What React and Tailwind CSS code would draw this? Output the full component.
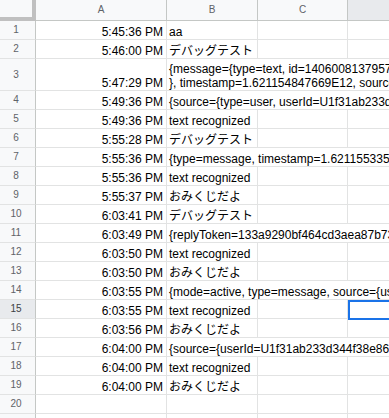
import React from "react";

const rows = [
  { n: 1, time: "5:45:36 PM", text: "aa" },
  { n: 2, time: "5:46:00 PM", text: "デバッグテスト" },
  {
    n: 3,
    time: "5:47:29 PM",
    lines: [
      "{message={type=text, id=14060081379573, text=デバッグテスト}, replyToken=5b2f1c0e",
      "}, timestamp=1.621154847669E12, source={type=user, userId=U1f31ab233d344f38e86}",
    ],
    wide: true,
    tall: true,
  },
  { n: 4, time: "5:49:36 PM", text: "{source={type=user, userId=U1f31ab233d344f38e86a1c}, mode=active}", wide: true },
  { n: 5, time: "5:49:36 PM", text: "text recognized" },
  { n: 6, time: "5:55:28 PM", text: "デバッグテスト" },
  { n: 7, time: "5:55:36 PM", text: "{type=message, timestamp=1.621155335806E12, source={type=user}}", wide: true },
  { n: 8, time: "5:55:36 PM", text: "text recognized" },
  { n: 9, time: "5:55:37 PM", text: "おみくじだよ" },
  { n: 10, time: "6:03:41 PM", text: "デバッグテスト" },
  { n: 11, time: "6:03:49 PM", text: "{replyToken=133a9290bf464cd3aea87b73e4c1f0a2, type=message}", wide: true },
  { n: 12, time: "6:03:50 PM", text: "text recognized" },
  { n: 13, time: "6:03:50 PM", text: "おみくじだよ" },
  { n: 14, time: "6:03:55 PM", text: "{mode=active, type=message, source={userId=U1f31ab233d}}", wide: true },
  { n: 15, time: "6:03:55 PM", text: "text recognized", selected: true },
  { n: 16, time: "6:03:56 PM", text: "おみくじだよ" },
  { n: 17, time: "6:04:00 PM", text: "{source={userId=U1f31ab233d344f38e86a1c, type=user}}", wide: true },
  { n: 18, time: "6:04:00 PM", text: "text recognized" },
  { n: 19, time: "6:04:00 PM", text: "おみくじだよ" },
  { n: 20, time: "", text: "" },
  { n: 21, time: "", text: "" },
];

function RowHead({ n, selected }) {
  return (
    <div
      className={
        selected
          ? "w-[36px] shrink-0 border-r border-b border-r-[#c4c7c5] border-b-[#e2e3e3] bg-[#e8eaed] flex items-center justify-center pr-[3px] text-[10px] text-[#3c4043]"
          : "w-[36px] shrink-0 border-r border-b border-r-[#c4c7c5] border-b-[#e2e3e3] bg-[#f8f9fa] flex items-center justify-center pr-[3px] text-[10px] text-[#5f6368]"
      }
    >
      {n}
    </div>
  );
}

function Row({ row }) {
  return (
    <div className={row.tall ? "flex h-[32px] shrink-0" : "flex h-[19px] shrink-0"}>
      <RowHead n={row.n} selected={row.selected} />
      <div className="w-[131px] shrink-0 border-r border-b border-[#e2e3e3] flex items-end justify-end pr-[3px] whitespace-nowrap">
        {row.time}
      </div>
      {row.wide ? (
        <div className="flex-1 min-w-0 border-b border-[#e2e3e3] overflow-hidden whitespace-nowrap pl-[2px] flex flex-col justify-end">
          {row.lines ? row.lines.map((l, i) => <div key={i}>{l}</div>) : <div>{row.text}</div>}
        </div>
      ) : (
        <>
          <div className="w-[91px] shrink-0 border-r border-b border-[#e2e3e3] flex items-end pl-[2px] whitespace-nowrap">
            {row.text}
          </div>
          <div className="w-[90px] shrink-0 border-r border-b border-[#e2e3e3]" />
          <div className="relative flex-1 border-b border-[#e2e3e3]">
            {row.selected && (
              <div className="absolute left-0 top-0 h-[20px] w-[60px] border-2 border-[#1a73e8]" />
            )}
          </div>
        </>
      )}
    </div>
  );
}

export default function App() {
  return (
    <div className="w-[389px] h-[418px] overflow-hidden bg-white flex flex-col font-['Liberation_Sans','Noto_Sans_CJK_JP',sans-serif] text-[12px] leading-[14px] text-black">
      <div className="flex h-[21px] shrink-0 bg-[#f8f9fa] text-[10px] text-[#5f6368]">
        <div className="w-[36px] shrink-0 border-r-4 border-b-4 border-[#c0c0c0]" />
        <div className="w-[131px] shrink-0 border-r border-b border-[#c4c7c5] flex items-center justify-center">A</div>
        <div className="w-[91px] shrink-0 border-r border-b border-[#c4c7c5] flex items-center justify-center">B</div>
        <div className="w-[90px] shrink-0 border-r border-b border-[#c4c7c5] flex items-center justify-center">C</div>
        <div className="flex-1 border-b border-[#c4c7c5] bg-[#e8eaed]" />
      </div>
      {rows.map((r) => (
        <Row key={r.n} row={r} />
      ))}
    </div>
  );
}
